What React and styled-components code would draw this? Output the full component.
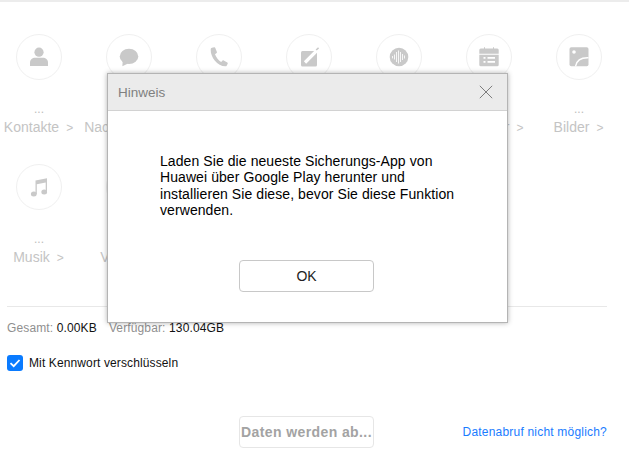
import React from "react";
import styled, { createGlobalStyle } from "styled-components";

const GlobalStyle = createGlobalStyle`
  html, body {
    margin: 0;
    padding: 0;
    background: #fff;
    font-family: "Liberation Sans", Arial, sans-serif;
  }
`;

const ICON_COLOR = "#c9c9c9";

const PersonIcon = () => (
  <svg width="20" height="20" viewBox="0 0 20 20" fill={ICON_COLOR}>
    <circle cx="10" cy="5.2" r="4.6" />
    <path d="M1 15.5C1 12.5 3.5 10.8 6 10.8h8c2.5 0 5 1.700 5 4.700V19H1z" />
  </svg>
);

const ChatIcon = () => (
  <svg width="20" height="20" viewBox="0 0 20 20" fill={ICON_COLOR}>
    <ellipse cx="10" cy="9.400" rx="9.300" ry="7.700" />
    <path d="M3.700 13.500 3.400 19.200 9 16.500z" />
  </svg>
);

const PhoneIcon = () => (
  <svg width="20" height="20" viewBox="0 0 20 20" fill={ICON_COLOR}>
    <path d="M3 .8 5.200 .3c.5-.1 .9 .1 1.100 .6l1.600 4c.2 .4 .1 .8-.3 1.100L6 7.300c.9 2.700 3.300 6 6.100 7.700l1.500-1.400c.3-.3 .7-.3 1.100-.1l3.600 2.100c.4 .2 .6 .7 .4 1.100l-.9 1.700c-.3 .6-.8 .9-1.500 .9C8.500 19.300 1.300 10.200 1.700 2.500 1.700 1.600 2.200 1 3 .8z" />
  </svg>
);

const NoteIcon = () => (
  <svg width="20" height="20" viewBox="0 0 20 20">
    <rect x="2" y="4" width="16" height="15.500" rx="1.500" fill={ICON_COLOR} />
    <path d="M6 15.500 20 1.500" stroke="#fff" strokeWidth="3.200" fill="none" />
    <path d="M17.200 3 19.600 .8" stroke={ICON_COLOR} strokeWidth="1.600" fill="none" />
  </svg>
);

const VoiceIcon = () => (
  <svg width="20" height="20" viewBox="0 0 20 20">
    <circle cx="10" cy="10" r="9.300" fill={ICON_COLOR} />
    <g stroke="#fff" strokeWidth="1" opacity=".85">
      <path d="M3.500 9v2.400" />
      <path d="M5.500 7.500v5" />
      <path d="M7.500 5v10" />
      <path d="M9.500 3.500v13" />
      <path d="M11.500 5v10" />
      <path d="M13.500 7v6" />
      <path d="M15.500 8.500v3" />
    </g>
  </svg>
);

const CalendarIcon = () => (
  <svg width="20" height="20" viewBox="0 0 20 20" fill={ICON_COLOR}>
    <path d="M1.800 1.500h16.400A1.500 1.500 0 0 1 19.700 3v3.700H.3V3a1.500 1.500 0 0 1 1.500-1.500z" />
    <path d="M5 .2h1v2H5zM14 .2h1v2h-1z" />
    <path
      fillRule="evenodd"
      d="M.3 7.800h19.400v10a1.500 1.500 0 0 1-1.500 1.500H1.800a1.500 1.500 0 0 1-1.500-1.500zM4.500 10v1.700h2V10zm4 0v1.700h7.500V10zm-4 4v1.700h2V14zm4 0v1.700h7.500V14z"
    />
  </svg>
);

const ImageIcon = () => (
  <svg width="20" height="20" viewBox="0 0 20 20">
    <rect x=".5" y=".3" width="19" height="19" rx="1.800" fill={ICON_COLOR} />
    <circle cx="5" cy="5" r="1.800" fill="#fff" />
    <path d="M6.500 19.300C7.500 14 12 10.500 19.500 10.800" fill="none" stroke="#fff" strokeWidth="1.400" />
  </svg>
);

const MusicIcon = () => (
  <svg width="20" height="20" viewBox="0 0 20 20" fill={ICON_COLOR}>
    <path d="M6.500 3.500 18 1.200v13.800h-1.300V5.400L7.800 7.200V17.300H6.500z" />
    <ellipse cx="4.800" cy="17" rx="2.900" ry="2.500" />
    <ellipse cx="15.200" cy="15" rx="2.900" ry="2.500" />
  </svg>
);

const ITEMS = [
  { label: "Kontakte", Icon: PersonIcon },
  { label: "Nachrichten", Icon: ChatIcon },
  { label: "Anrufliste", Icon: PhoneIcon },
  { label: "Notizen", Icon: NoteIcon },
  { label: "Aufnahmen", Icon: VoiceIcon },
  { label: "Kalender", Icon: CalendarIcon },
  { label: "Bilder", Icon: ImageIcon },
  { label: "Musik", Icon: MusicIcon },
  { label: "Videos" },
];

const App = () => (
  <Page>
    <GlobalStyle />
    <TopLine />
    <Grid>
      {ITEMS.map(({ label, Icon }) => (
        <Item key={label}>
          <Circle>{Icon && <Icon />}</Circle>
          <Dots>...</Dots>
          <Label>
            {label}
            <Arrow>&gt;</Arrow>
          </Label>
        </Item>
      ))}
    </Grid>
    <Divider />
    <Stats>
      <StatKey>Gesamt:</StatKey> <StatValue>0.00KB</StatValue>
      <StatKey $spaced>Verfügbar:</StatKey> <StatValue>130.04GB</StatValue>
    </Stats>
    <CheckRow>
      <CheckBox>
        <svg width="12" height="12" viewBox="0 0 12 12" fill="none" stroke="#fff" strokeWidth="1.800">
          <path d="M1.500 6.200 4.700 9.200 10.500 3" />
        </svg>
      </CheckBox>
      Mit Kennwort verschlüsseln
    </CheckRow>
    <Footer>
      <LoadingButton>Daten werden ab...</LoadingButton>
      <HelpLink>Datenabruf nicht möglich?</HelpLink>
    </Footer>

    <Dialog>
      <DialogHeader>
        Hinweis
        <CloseIcon viewBox="0 0 14 14" fill="none" stroke="#7d7d7d" strokeWidth="1">
          <path d="M.8 .8 13.200 13.200M13.200 .8 .8 13.200" />
        </CloseIcon>
      </DialogHeader>
      <DialogBody>
        Laden Sie die neueste Sicherungs-App von Huawei über Google Play herunter und installieren Sie
        diese, bevor Sie diese Funktion verwenden.
      </DialogBody>
      <OkButton>OK</OkButton>
    </Dialog>
  </Page>
);

const Page = styled.div`
  position: relative;
  width: 629px;
  height: 456px;
  overflow: hidden;
  background: #fff;
`;

const TopLine = styled.div`
  height: 2px;
  background: #ececec;
`;

const Grid = styled.div`
  display: grid;
  grid-template-columns: repeat(7, 90px);
  grid-auto-rows: 130px;
  margin-left: -6px;
  padding-top: 32px;
`;

const Item = styled.div`
  display: flex;
  flex-direction: column;
  align-items: center;
`;

const Circle = styled.div`
  box-sizing: border-box;
  display: flex;
  align-items: center;
  justify-content: center;
  width: 46px;
  height: 46px;
  border: 1px solid #f0f0f0;
  border-radius: 50%;
`;

const Dots = styled.div`
  height: 14px;
  margin-top: 22px;
  font-size: 12px;
  line-height: 14px;
  color: #bdbdbd;
`;

const Label = styled.div`
  margin-top: 3px;
  padding-right: 1px;
  font-size: 14px;
  line-height: 16px;
  color: #c4c4c4;
  white-space: nowrap;
`;

const Arrow = styled.span`
  margin-left: 7px;
  font-size: 12px;
`;

const Divider = styled.div`
  height: 1px;
  margin: 12px 22px 0 7px;
  background: #e8e8e8;
`;

const Stats = styled.div`
  margin: 14px 0 0 7px;
  font-size: 12px;
  line-height: 14px;
  letter-spacing: 0.13px;
`;

const StatKey = styled.span`
  margin-left: ${(props) => (props.$spaced ? "12px" : "0")};
  color: #8f8f8f;
`;

const StatValue = styled.span`
  color: #111;
`;

const CheckRow = styled.div`
  display: flex;
  align-items: center;
  gap: 6px;
  margin: 20px 0 0 7px;
  font-size: 12px;
  line-height: 16px;
  letter-spacing: 0.12px;
  color: #111;
`;

const CheckBox = styled.span`
  display: flex;
  align-items: center;
  justify-content: center;
  width: 16px;
  height: 16px;
  border-radius: 3px;
  background: #0a7bff;
`;

const Footer = styled.div`
  display: flex;
  align-items: center;
  justify-content: space-between;
  margin: 45px 22px 0 239px;
`;

const LoadingButton = styled.div`
  box-sizing: border-box;
  width: 135px;
  height: 32px;
  border: 1px solid #e6e6e6;
  border-radius: 4px;
  font-size: 14px;
  font-weight: 700;
  line-height: 30px;
  text-align: center;
  letter-spacing: 0.4px;
  white-space: nowrap;
  color: #a3a3a3;
`;

const HelpLink = styled.a`
  margin-top: -1px;
  font-size: 12px;
  line-height: 14px;
  letter-spacing: 0.2px;
  color: #1a7cff;
`;

const Dialog = styled.div`
  position: absolute;
  top: 73px;
  left: 107px;
  box-sizing: border-box;
  display: flex;
  flex-direction: column;
  width: 401px;
  height: 250px;
  border: 1px solid #b4b4b4;
  background: #fff;
  box-shadow: 0 0 5px rgba(0, 0, 0, 0.3);
`;

const DialogHeader = styled.div`
  box-sizing: border-box;
  display: flex;
  align-items: center;
  justify-content: space-between;
  height: 37px;
  padding: 0 14px 0 10px;
  border-bottom: 1px solid #d2d2d2;
  background: #ebebeb;
  font-size: 13.5px;
  color: #808080;
`;

const CloseIcon = styled.svg`
  width: 14px;
  height: 14px;
`;

const DialogBody = styled.div`
  width: 298px;
  margin: 42px 0 0 52px;
  font-size: 14px;
  line-height: 16.4px;
  letter-spacing: 0.08px;
  color: #000;
`;

const OkButton = styled.div`
  box-sizing: border-box;
  width: 135px;
  height: 32px;
  margin: 41px 0 0 131px;
  border: 1px solid #c8c8c8;
  border-radius: 4px;
  font-size: 14px;
  line-height: 30px;
  text-align: center;
  color: #222;
`;

export default App;
